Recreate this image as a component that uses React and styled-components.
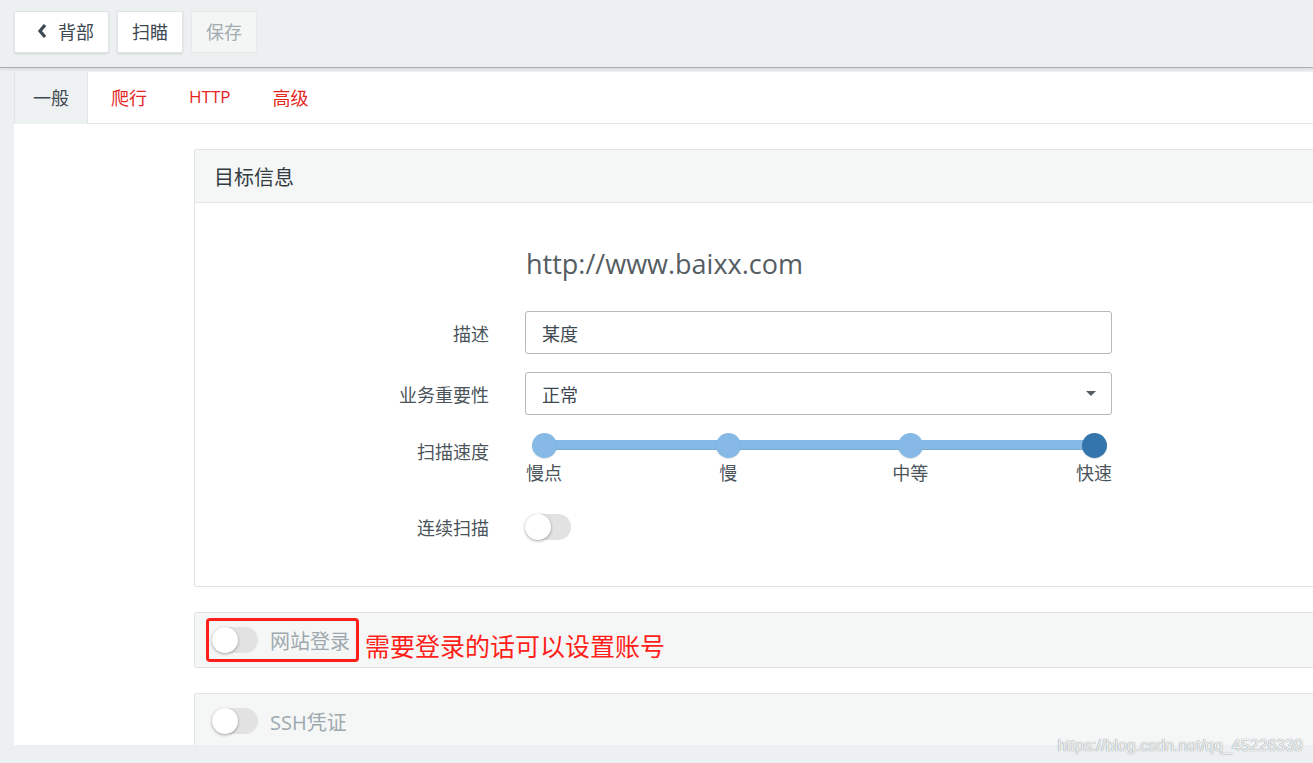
import React from "react";
import styled, { createGlobalStyle } from "styled-components";

const GlobalStyle = createGlobalStyle`
  html, body {
    margin: 0;
    padding: 0;
    background: #edf0f1;
    overflow: hidden;
    font-family: "Open Sans", "Noto Sans CJK SC", sans-serif;
  }
  * { box-sizing: border-box; }
`;

const Page = styled.div`
  width: 1313px;
  height: 763px;
  position: relative;
  overflow: hidden;
`;

// Toolbar
const Toolbar = styled.div`
  height: 68px;
  display: flex;
  align-items: flex-start;
  gap: 8px;
  padding: 11px 14px 0;
  background: #edf0f1;
  border-bottom: 1px solid #a9adaf;
  box-shadow: 0 1px 3px rgba(0, 0, 0, 0.12);
`;

const Button = styled.button`
  height: 42px;
  display: flex;
  align-items: center;
  gap: 11px;
  padding: 0 ${(p) => (p.$icon ? "14px 0 22px" : "14px")};
  padding-bottom: 3px;
  font-family: inherit;
  font-size: 18px;
  color: ${(p) => (p.disabled ? "#a3abb0" : "#3e4850")};
  background: ${(p) => (p.disabled ? "#f4f6f6" : "#fff")};
  border: 1px solid ${(p) => (p.disabled ? "#e6e9ea" : "#e1e4e5")};
  border-radius: 2px;
  box-shadow: ${(p) => (p.disabled ? "none" : "0 1px 2px rgba(0,0,0,0.12)")};
`;

// Main content
const Main = styled.div`
  padding: 4px 0 0 14px;
`;

const Content = styled.div`
  height: 673px;
  background: #fff;
  overflow: hidden;
`;

const TabBar = styled.div`
  height: 52px;
  display: flex;
  border-bottom: 1px solid #e2e6e7;
`;

const Tab = styled.div`
  height: 52px;
  display: flex;
  align-items: center;
  padding: 0 ${(p) => (p.$active ? "18px" : "19px")} 3px;
  margin-left: ${(p) => (p.$first ? "0" : "4px")};
  margin-bottom: -1px;
  font-size: ${(p) => (p.$latin ? "17px" : "18px")};
  color: ${(p) => (p.$active ? "#3e4850" : "#e4261f")};
  background: ${(p) => (p.$active ? "#eef1f2" : "transparent")};
  border-left: ${(p) => (p.$active ? "1px solid #dfe4e5" : "none")};
  border-right: ${(p) => (p.$active ? "1px solid #dfe4e5" : "none")};
`;

const TabBody = styled.div`
  padding: 25px 0 0 180px;
`;

const Panel = styled.div`
  width: 1200px;
  border: 1px solid #dfe3e4;
  border-radius: 2px;
  margin-bottom: 25px;
  position: relative;
`;

const PanelHeader = styled.div`
  height: ${(p) => (p.$toggle ? "54px" : "53px")};
  display: flex;
  align-items: center;
  padding-left: ${(p) => (p.$toggle ? "17px" : "19px")};
  background: #f5f7f7;
  border-bottom: ${(p) => (p.$toggle ? "none" : "1px solid #e4e8e9")};
  font-size: 20px;
  color: #333b40;
`;

const HeaderLabel = styled.span`
  margin-left: 12px;
  font-size: 20px;
  color: #9ea9af;
`;

const Annotation = styled.span`
  margin-left: 15px;
  margin-top: 9px;
  font-size: 25px;
  color: #ff1f1a;
  font-family: "Noto Sans CJK SC", sans-serif;
`;

const RedBox = styled.div`
  position: absolute;
  left: 11px;
  top: 5px;
  width: 153px;
  height: 44px;
  border: 3px solid #ff1f1a;
  border-radius: 4px;
`;

const PanelBody = styled.div`
  padding: 42px 0 46px;
  display: grid;
  grid-template-columns: 294px 587px;
  column-gap: 36px;
  align-items: center;
`;

const Url = styled.div`
  grid-column: 2;
  padding-left: 1px;
  font-size: 27px;
  color: #555d62;
  line-height: 38px;
  margin-bottom: 28px;
`;

const Label = styled.div`
  grid-column: 1;
  text-align: right;
  font-size: 18px;
  color: #4a545a;
  margin-bottom: ${(p) => p.$mb || "18px"};
  align-self: ${(p) => (p.$top ? "start" : "center")};
  padding-top: ${(p) => (p.$top ? "5px" : "0")};
`;

const Field = styled.div`
  height: 43px;
  display: flex;
  align-items: center;
  justify-content: space-between;
  padding: 0 16px;
  border: 1px solid #bab5b7;
  border-radius: 3px;
  font-size: 18px;
  color: #3e4850;
  margin-bottom: 18px;
`;

const Caret = styled.span`
  width: 0;
  height: 0;
  border-left: 5px solid transparent;
  border-right: 5px solid transparent;
  border-top: 5px solid #555d62;
  margin-right: -1px;
`;

const Slider = styled.div`
  position: relative;
  height: 54px;
  margin-bottom: 27px;
`;

const Track = styled.div`
  position: absolute;
  left: 19px;
  right: 18px;
  top: 7px;
  height: 10px;
  background: #85b9e6;
  box-shadow: inset 0 -1px 0 rgba(0, 0, 0, 0.08);
`;

const Thumb = styled.div`
  position: absolute;
  top: -7px;
  width: 25px;
  height: 25px;
  margin-left: -12px;
  border-radius: 50%;
  background: ${(p) => (p.$active ? "#3475ae" : "#86b9e6")};
  box-shadow: 0 1px 1px rgba(0, 0, 0, 0.12);
`;

const Mark = styled.div`
  position: absolute;
  top: 19px;
  transform: translateX(-50%);
  font-size: 18px;
  color: #4a545a;
  white-space: nowrap;
`;

const Switch = styled.div`
  width: 46px;
  height: 26px;
  border-radius: 13px;
  background: #e2e2e2;
  position: relative;
  flex-shrink: 0;
  &::after {
    content: "";
    position: absolute;
    left: 0;
    top: 0;
    width: 26px;
    height: 26px;
    border-radius: 50%;
    background: #fff;
    box-shadow: 0 1px 3px rgba(0, 0, 0, 0.35);
  }
`;

const Watermark = styled.div`
  position: absolute;
  right: 10px;
  bottom: 8px;
  font-family: "Liberation Sans", Arial, sans-serif;
  font-size: 16px;
  color: #eef0f1;
  text-shadow: 0 0 1px #9aa1a5, 0 0 1px #9aa1a5;
`;

const Chevron = () => (
  <svg width="10" height="16" viewBox="0 0 10 16">
    <path d="M8 2 L3 8 L8 14" fill="none" stroke="#3e4850" strokeWidth="3.2" />
  </svg>
);

const marks = [
  { pos: 0, label: "慢点" },
  { pos: 33.5, label: "慢" },
  { pos: 66.6, label: "中等" },
  { pos: 100, label: "快速", active: true },
];

const App = () => {
  return (
    <Page>
      <GlobalStyle />
      <Toolbar>
        <Button $icon>
          <Chevron />
          背部
        </Button>
        <Button>扫瞄</Button>
        <Button disabled>保存</Button>
      </Toolbar>
      <Main>
        <Content>
          <TabBar>
            <Tab $first $active>一般</Tab>
            <Tab>爬行</Tab>
            <Tab $latin>HTTP</Tab>
            <Tab>高级</Tab>
          </TabBar>
          <TabBody>
            <Panel>
              <PanelHeader>目标信息</PanelHeader>
              <PanelBody>
                <Url>http://www.baixx.com</Url>
                <Label>描述</Label>
                <Field>某度</Field>
                <Label>业务重要性</Label>
                <Field>
                  正常
                  <Caret />
                </Field>
                <Label $top $mb="27px">扫描速度</Label>
                <Slider>
                  <Track>
                    {marks.map((m) => (
                      <Thumb key={m.label} $active={m.active} style={{ left: `${m.pos}%` }} />
                    ))}
                    {marks.map((m) => (
                      <Mark key={m.label} style={{ left: `${m.pos}%` }}>{m.label}</Mark>
                    ))}
                  </Track>
                </Slider>
                <Label $mb="0">连续扫描</Label>
                <div><Switch /></div>
              </PanelBody>
            </Panel>
            <Panel>
              <PanelHeader $toggle>
                <Switch />
                <HeaderLabel>网站登录</HeaderLabel>
                <Annotation>需要登录的话可以设置账号</Annotation>
              </PanelHeader>
              <RedBox />
            </Panel>
            <Panel>
              <PanelHeader $toggle>
                <Switch />
                <HeaderLabel>SSH凭证</HeaderLabel>
              </PanelHeader>
            </Panel>
          </TabBody>
        </Content>
      </Main>
      <Watermark>https://blog.csdn.net/qq_45226339</Watermark>
    </Page>
  );
};

export default App;
